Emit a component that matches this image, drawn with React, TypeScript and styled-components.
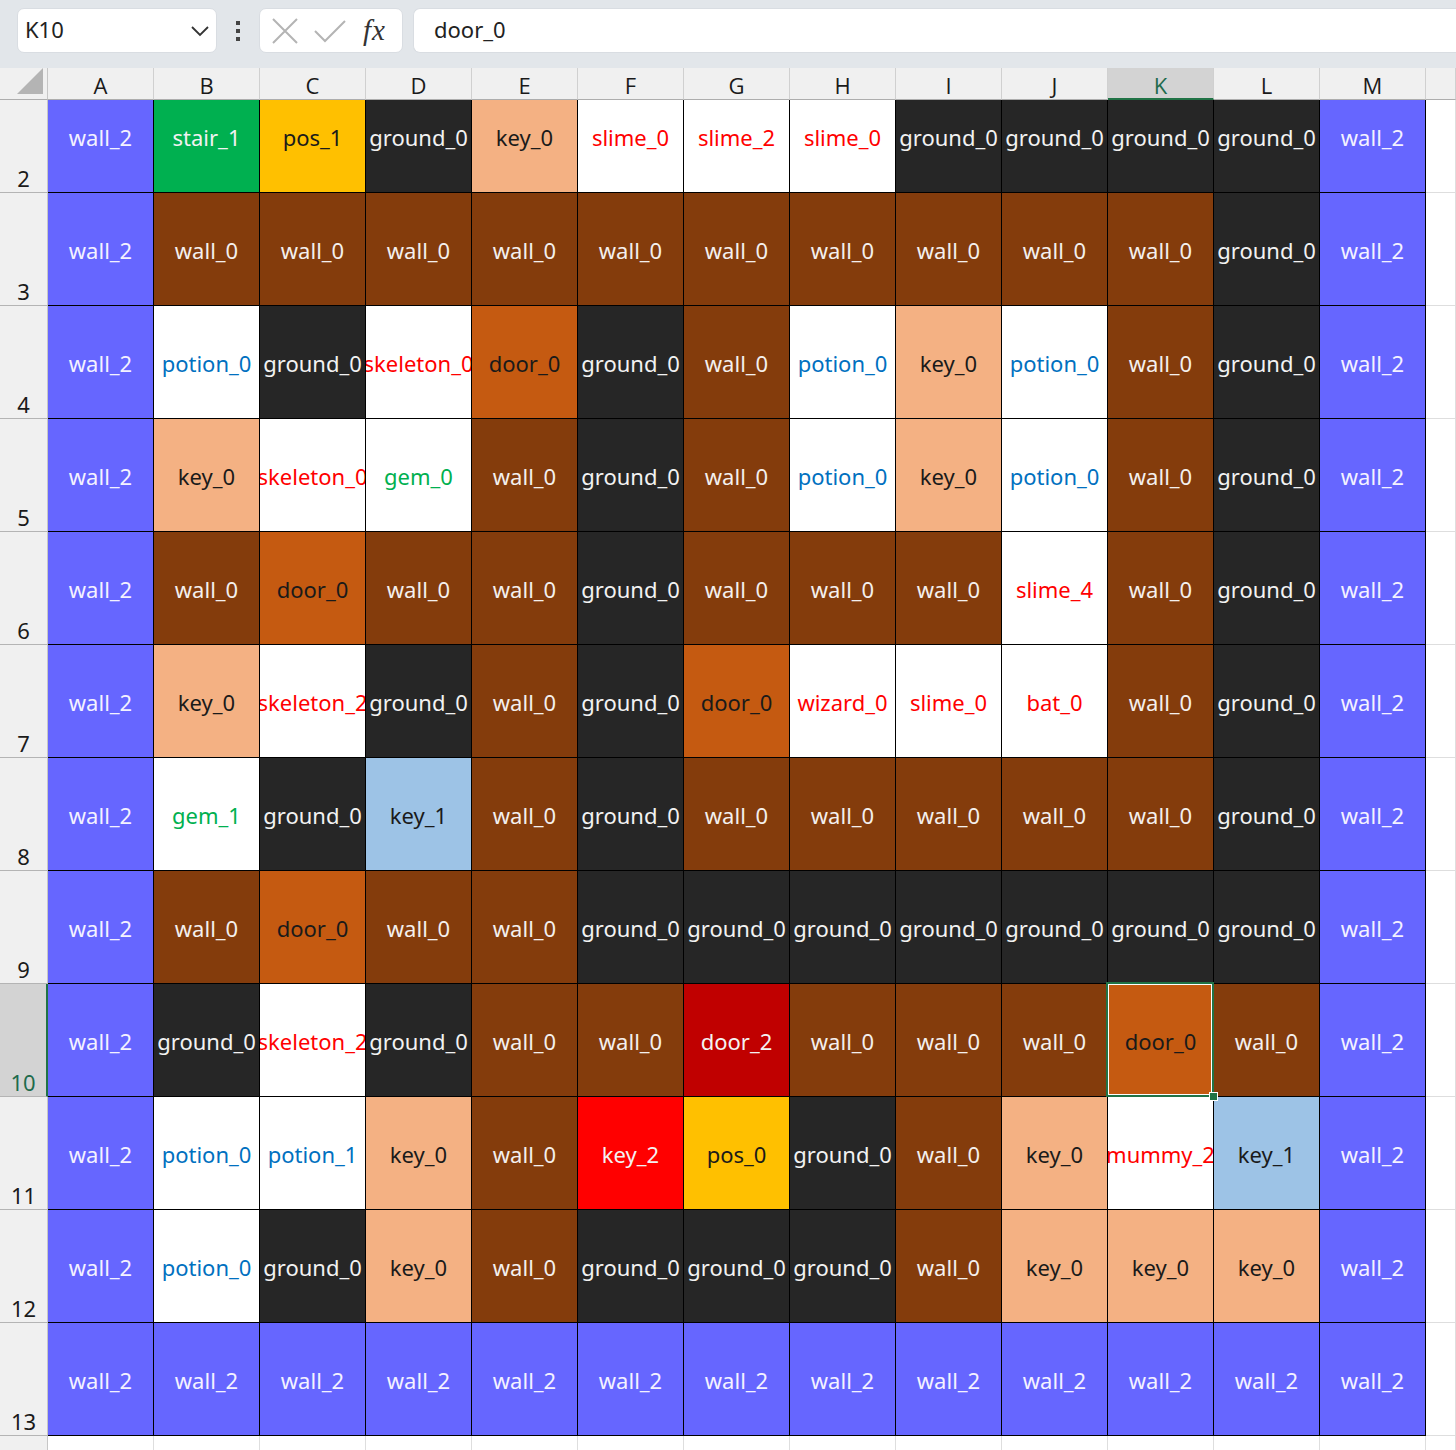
import React from "react";
import styled, { createGlobalStyle, css } from "styled-components";

const GlobalStyle = createGlobalStyle`
    html, body {
        margin: 0;
        padding: 0;
        background: #ffffff;
    }
    body {
        font-family: "Noto Sans", "Open Sans", sans-serif;
    }
`;

type TileStyle = { bg: string; fg: string };

const tileStyles: Record<string, TileStyle> = {
    wall_2: { bg: "#6666ff", fg: "#f4f2ff" },
    wall_0: { bg: "#843c0c", fg: "#f4f0ee" },
    ground_0: { bg: "#262626", fg: "#f2f2f2" },
    stair_1: { bg: "#00b050", fg: "#f2f2f2" },
    pos: { bg: "#ffc000", fg: "#1a1a1a" },
    key_0: { bg: "#f4b183", fg: "#1a1a1a" },
    key_1: { bg: "#9dc3e6", fg: "#1a1a1a" },
    key_2: { bg: "#ff0000", fg: "#f4f2f2" },
    door_0: { bg: "#c55a11", fg: "#1a1a1a" },
    door_2: { bg: "#c00000", fg: "#f4f2f2" },
    monster: { bg: "#ffffff", fg: "#ff0000" },
    potion: { bg: "#ffffff", fg: "#0070c0" },
    gem: { bg: "#ffffff", fg: "#00b050" },
};

const monsters = ["slime", "skeleton", "wizard", "bat", "mummy"];

const styleFor = (value: string): TileStyle => {
    if (tileStyles[value]) return tileStyles[value];
    const kind = value.split("_")[0];
    if (kind === "pos") return tileStyles.pos;
    if (kind === "potion") return tileStyles.potion;
    if (kind === "gem") return tileStyles.gem;
    if (monsters.includes(kind)) return tileStyles.monster;
    return { bg: "#ffffff", fg: "#000000" };
};

const columns = ["A", "B", "C", "D", "E", "F", "G", "H", "I", "J", "K", "L", "M"];

const rows: { num: number; cells: string[] }[] = [
    { num: 2, cells: ["wall_2", "stair_1", "pos_1", "ground_0", "key_0", "slime_0", "slime_2", "slime_0", "ground_0", "ground_0", "ground_0", "ground_0", "wall_2"] },
    { num: 3, cells: ["wall_2", "wall_0", "wall_0", "wall_0", "wall_0", "wall_0", "wall_0", "wall_0", "wall_0", "wall_0", "wall_0", "ground_0", "wall_2"] },
    { num: 4, cells: ["wall_2", "potion_0", "ground_0", "skeleton_0", "door_0", "ground_0", "wall_0", "potion_0", "key_0", "potion_0", "wall_0", "ground_0", "wall_2"] },
    { num: 5, cells: ["wall_2", "key_0", "skeleton_0", "gem_0", "wall_0", "ground_0", "wall_0", "potion_0", "key_0", "potion_0", "wall_0", "ground_0", "wall_2"] },
    { num: 6, cells: ["wall_2", "wall_0", "door_0", "wall_0", "wall_0", "ground_0", "wall_0", "wall_0", "wall_0", "slime_4", "wall_0", "ground_0", "wall_2"] },
    { num: 7, cells: ["wall_2", "key_0", "skeleton_2", "ground_0", "wall_0", "ground_0", "door_0", "wizard_0", "slime_0", "bat_0", "wall_0", "ground_0", "wall_2"] },
    { num: 8, cells: ["wall_2", "gem_1", "ground_0", "key_1", "wall_0", "ground_0", "wall_0", "wall_0", "wall_0", "wall_0", "wall_0", "ground_0", "wall_2"] },
    { num: 9, cells: ["wall_2", "wall_0", "door_0", "wall_0", "wall_0", "ground_0", "ground_0", "ground_0", "ground_0", "ground_0", "ground_0", "ground_0", "wall_2"] },
    { num: 10, cells: ["wall_2", "ground_0", "skeleton_2", "ground_0", "wall_0", "wall_0", "door_2", "wall_0", "wall_0", "wall_0", "door_0", "wall_0", "wall_2"] },
    { num: 11, cells: ["wall_2", "potion_0", "potion_1", "key_0", "wall_0", "key_2", "pos_0", "ground_0", "wall_0", "key_0", "mummy_2", "key_1", "wall_2"] },
    { num: 12, cells: ["wall_2", "potion_0", "ground_0", "key_0", "wall_0", "ground_0", "ground_0", "ground_0", "wall_0", "key_0", "key_0", "key_0", "wall_2"] },
    { num: 13, cells: ["wall_2", "wall_2", "wall_2", "wall_2", "wall_2", "wall_2", "wall_2", "wall_2", "wall_2", "wall_2", "wall_2", "wall_2", "wall_2"] },
];

const selectedRow = 10;
const selectedCol = "K";

const App: React.FC = () => {
    return (
        <Page>
            <GlobalStyle />
            <FormulaBar>
                <NameBox>
                    <span>K10</span>
                    <svg width="20" height="12" viewBox="0 0 20 12">
                        <path d="M2 2 L10 10 L18 2" fill="none" stroke="#333" strokeWidth="1.8" />
                    </svg>
                </NameBox>
                <MoreDots>
                    <i />
                    <i />
                    <i />
                </MoreDots>
                <ActionBox>
                    <svg width="28" height="28" viewBox="0 0 28 28">
                        <path d="M2 2 L26 26 M26 2 L2 26" stroke="#b4b4b4" strokeWidth="2" />
                    </svg>
                    <svg width="34" height="24" viewBox="0 0 34 24">
                        <path d="M2 12 L12 22 L32 2" fill="none" stroke="#b4b4b4" strokeWidth="2" />
                    </svg>
                    <FxLabel>fx</FxLabel>
                </ActionBox>
                <FormulaInput>door_0</FormulaInput>
            </FormulaBar>

            <HeaderRow>
                <Corner>
                    <svg width="26" height="26" viewBox="0 0 26 26">
                        <path d="M26 0 L26 26 L0 26 Z" fill="#b4b4b4" />
                    </svg>
                </Corner>
                {columns.map((col) => (
                    <ColHeader key={col} active={col === selectedCol}>
                        {col}
                    </ColHeader>
                ))}
                <ColHeader active={false} />
            </HeaderRow>

            <SheetBody>
                <SheetGrid>
                    {rows.map((row) => (
                        <React.Fragment key={row.num}>
                            <RowHeader active={row.num === selectedRow}>{row.num}</RowHeader>
                            {row.cells.map((value, i) => {
                                const tile = styleFor(value);
                                const isSelected = row.num === selectedRow && columns[i] === selectedCol;
                                return (
                                    <Cell key={i} bg={tile.bg} fg={tile.fg} selected={isSelected}>
                                        <span>{value}</span>
                                        {isSelected && <FillHandle />}
                                    </Cell>
                                );
                            })}
                            <EmptyCell />
                        </React.Fragment>
                    ))}
                    <RowHeader active={false} />
                    {columns.map((col) => (
                        <EmptyCell key={col} />
                    ))}
                    <EmptyCell />
                </SheetGrid>
            </SheetBody>
        </Page>
    );
};

export default App;

const Page = styled.div`
    width: 1456px;
    height: 1450px;
    overflow: hidden;
    display: flex;
    flex-direction: column;
    background: #ffffff;
    color: #1f1f1f;
`;

const FormulaBar = styled.div`
    height: 68px;
    flex-shrink: 0;
    box-sizing: border-box;
    display: flex;
    align-items: center;
    padding: 0 0 7px 17px;
    background: #e2e6ea;
`;

const NameBox = styled.div`
    width: 200px;
    height: 45px;
    box-sizing: border-box;
    display: flex;
    align-items: center;
    justify-content: space-between;
    padding: 0 6px 3px 7px;
    background: #ffffff;
    border: 1px solid #d9dde2;
    border-radius: 7px;
    font-size: 22px;
    color: #222;

    & svg {
        margin-top: 3px;
    }
`;

const MoreDots = styled.div`
    width: 42px;
    display: flex;
    flex-direction: column;
    align-items: center;
    gap: 4px;

    & i {
        display: block;
        width: 4px;
        height: 4px;
        background: #444;
    }
`;

const ActionBox = styled.div`
    width: 144px;
    height: 45px;
    box-sizing: border-box;
    display: flex;
    align-items: center;
    gap: 14px;
    padding: 0 10px 0 11px;
    background: #ffffff;
    border: 1px solid #d9dde2;
    border-radius: 7px;
`;

const FxLabel = styled.span`
    font-family: "Liberation Serif", "DejaVu Serif", serif;
    font-style: italic;
    font-size: 29px;
    color: #333;
    margin-left: 2px;
    letter-spacing: 1px;
`;

const FormulaInput = styled.div`
    flex: 1;
    height: 45px;
    margin-left: 10px;
    box-sizing: border-box;
    display: flex;
    align-items: center;
    padding: 0 0 3px 20px;
    background: #ffffff;
    border: 1px solid #d9dde2;
    border-right: none;
    border-radius: 7px 0 0 7px;
    font-size: 22px;
    color: #222;
`;

const gridColumns = css`
    display: grid;
    grid-template-columns: 48px repeat(13, 106px) 1fr;
`;

const HeaderRow = styled.div`
    ${gridColumns};
    height: 32px;
    flex-shrink: 0;
    background: #f0f0f0;
`;

const Corner = styled.div`
    display: flex;
    align-items: flex-end;
    justify-content: flex-end;
    padding: 0 4px 5px 0;
    box-sizing: border-box;
    border-right: 1px solid #c6c6c6;
    border-bottom: 1px solid #adadad;
`;

const ColHeader = styled.div<{ active: boolean }>`
    display: flex;
    align-items: center;
    justify-content: center;
    box-sizing: border-box;
    font-family: "Open Sans", "Noto Sans", sans-serif;
    font-size: 22px;
    line-height: 1;
    padding-top: 3px;
    color: ${(p) => (p.active ? "#1e6b4c" : "#1a1a1a")};
    background: ${(p) => (p.active ? "#d3d3d3" : "#f0f0f0")};
    border-right: 1px solid #d0d0d0;
    border-bottom: ${(p) => (p.active ? "2px solid #217346" : "1px solid #adadad")};
`;

const SheetBody = styled.div`
    flex: 1;
    overflow: hidden;
`;

const SheetGrid = styled.div`
    ${gridColumns};
    grid-auto-rows: 113px;
    margin-top: -20px;
`;

const RowHeader = styled.div<{ active: boolean }>`
    display: flex;
    align-items: flex-end;
    justify-content: center;
    box-sizing: border-box;
    font-size: 22px;
    line-height: 26px;
    padding-bottom: 1px;
    color: ${(p) => (p.active ? "#1e6b4c" : "#1a1a1a")};
    background: ${(p) => (p.active ? "#d3d3d3" : "#f0f0f0")};
    border-bottom: 1px solid #b4b4b4;
    border-right: ${(p) => (p.active ? "2px solid #217346" : "1px solid #c6c6c6")};
`;

const Cell = styled.div<{ bg: string; fg: string; selected: boolean }>`
    position: relative;
    display: flex;
    align-items: center;
    justify-content: center;
    box-sizing: border-box;
    overflow: hidden;
    white-space: nowrap;
    padding-top: 1px;
    font-size: 22px;
    background: ${(p) => p.bg};
    color: ${(p) => p.fg};
    border-right: 1px solid #000;
    border-bottom: 1px solid #000;

    ${(p) =>
        p.selected &&
        css`
            overflow: visible;
            z-index: 2;

            &::after {
                content: "";
                position: absolute;
                top: -2px;
                left: -2px;
                right: -1px;
                bottom: -1px;
                border: 2px solid #217346;
                box-shadow: inset 0 0 0 1px #ffffff;
                pointer-events: none;
            }
        `}
`;

const FillHandle = styled.div`
    position: absolute;
    z-index: 1;
    right: -5px;
    bottom: -5px;
    width: 7px;
    height: 7px;
    background: #217346;
    border: 1px solid #ffffff;
`;

const EmptyCell = styled.div`
    box-sizing: border-box;
    background: #ffffff;
    border-right: 1px solid #dedede;
    border-bottom: 1px solid #dedede;
`;
